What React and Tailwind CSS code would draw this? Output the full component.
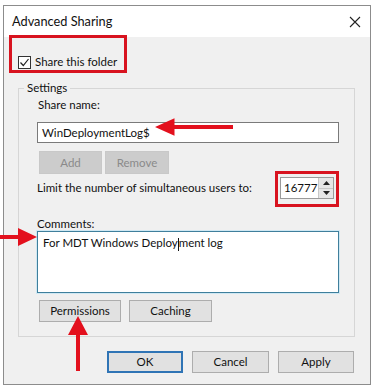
import React from 'react';

const Btn = ({ children, className = '' }) => (
    <div className={`flex items-center justify-center border border-[#adadad] bg-[#e1e1e1] text-[11.5px] text-[#111] ${className}`}>
        {children}
    </div>
);

const ArrowLeft = ({ className }) => (
    <svg className={className} viewBox="0 0 80 18" fill="#e3101d">
        <polygon points="0,9 20,0 20,7 80,7 80,11 20,11 20,18" />
    </svg>
);

const App = () => {
    return (
        <div className="relative w-[371px] h-[390px] bg-white pt-[5px] pl-[3px] font-['Lato',sans-serif] text-[#111] overflow-hidden whitespace-nowrap">
            <div className="w-[368px] h-[380px] border border-[#8c8c8c] bg-[#f0f0f0] flex flex-col">
                {/* title bar */}
                <div className="h-[31px] bg-white flex items-center justify-between pl-[8px] pr-[9px]">
                    <span className="text-[12.75px] leading-none">Advanced Sharing</span>
                    <svg width="12" height="12" viewBox="0 0 12 12" stroke="#222" strokeWidth="1.1">
                        <path d="M1 1 L11 11 M11 1 L1 11" />
                    </svg>
                </div>

                <div className="px-[14px]">
                    {/* share checkbox */}
                    <div className="relative mt-[17px] flex items-center gap-[4px] h-[16px] w-fit">
                        <div className="w-[13px] h-[13px] border border-[#333] bg-white flex items-center justify-center">
                            <svg width="11" height="11" viewBox="0 0 11 11" fill="none" stroke="#222" strokeWidth="1.2">
                                <path d="M1.5 5.5 L4.3 8.5 L9.5 2" />
                            </svg>
                        </div>
                        <span className="text-[11.5px] leading-none">Share this folder</span>
                        <div className="absolute -left-[9px] -top-[19px] w-[118px] h-[38px] border-[3px] border-[#d8131f]" />
                    </div>

                    {/* settings group */}
                    <fieldset className="mt-[10px] border border-[#d6d6d6] w-[337px] pl-[18px] pr-[15px] pb-[14px]">
                        <legend className="-ml-[13px] px-[3px] text-[11.5px] leading-[16px]">Settings</legend>

                        <div className="mt-[1px] text-[11.5px] leading-[16px] ml-[1px]">Share name:</div>
                        <div className="mt-[9px] h-[21px] border border-[#7a7a7a] bg-white flex items-center px-[4px] text-[11.5px]">
                            WinDeploymentLog$
                        </div>

                        <div className="mt-[8px] ml-[2px] flex gap-[3px]">
                            <Btn className="w-[63px] h-[23px] !border-[#c8c8c8] !bg-[#cccccc] !text-[#8a8a8a]">Add</Btn>
                            <Btn className="w-[64px] h-[23px] !border-[#c8c8c8] !bg-[#cccccc] !text-[#8a8a8a]">Remove</Btn>
                        </div>

                        <div className="mt-[3px] flex items-center justify-between">
                            <span className="text-[11.5px]">Limit the number of simultaneous users to:</span>
                            <div className="relative mr-[5px] flex h-[22px] w-[54px] border border-[#9a9a9a] bg-white">
                                <div className="flex-1 flex items-center pl-[3px] text-[11.5px]">16777</div>
                                <div className="w-[15px] flex flex-col border-l border-[#c8c8c8]">
                                    <div className="flex-1 bg-[#e6e6e6] flex items-center justify-center border-b border-[#c8c8c8]">
                                        <svg width="7" height="4" viewBox="0 0 7 4" fill="#222"><polygon points="3.5,0 7,4 0,4" /></svg>
                                    </div>
                                    <div className="flex-1 bg-[#e6e6e6] flex items-center justify-center">
                                        <svg width="7" height="4" viewBox="0 0 7 4" fill="#222"><polygon points="0,0 7,0 3.5,4" /></svg>
                                    </div>
                                </div>
                                <div className="absolute -left-[6px] -top-[7px] w-[64px] h-[36px] border-[3px] border-[#d8131f]" />
                            </div>
                        </div>

                        <div className="mt-[18px] text-[11.5px] leading-[14px]">Comments:</div>
                        <div className="h-[62px] border border-[#3f7f9c] bg-white shadow-[0_0_0_1px_#cfe8f3] px-[5px] pt-[2px] text-[11.5px]">
                            For MDT Windows Deploy<span className="inline-block w-[1px] h-[13px] bg-[#111] align-middle"></span>ment log
                        </div>

                        <div className="mt-[7px] ml-[2px] flex gap-[8px]">
                            <Btn className="w-[82px] h-[22px]">Permissions</Btn>
                            <Btn className="w-[83px] h-[22px]">Caching</Btn>
                        </div>
                    </fieldset>
                </div>

                {/* dialog buttons */}
                <div className="mt-[14px] pr-[16px] flex justify-end gap-[9px]">
                    <Btn className="w-[76px] h-[22px] !border-2 !border-[#2f74b5]">OK</Btn>
                    <Btn className="w-[77px] h-[22px]">Cancel</Btn>
                    <Btn className="w-[76px] h-[22px]">Apply</Btn>
                </div>
            </div>

            {/* annotation arrows */}
            <ArrowLeft className="absolute left-[155px] top-[118px] w-[78px] h-[18px]" />
            <svg className="absolute left-0 top-[228px] w-[37px] h-[18px]" viewBox="0 0 37 18" fill="#e3101d">
                <polygon points="37,9 18,0 18,7 0,7 0,11 18,11 18,18" />
            </svg>
            <svg className="absolute left-[68px] top-[316px] w-[20px] h-[55px]" viewBox="0 0 20 55" fill="#e3101d">
                <polygon points="10,0 20,19 12,19 12,55 8,55 8,19 0,19" />
            </svg>
        </div>
    );
};

export default App;
